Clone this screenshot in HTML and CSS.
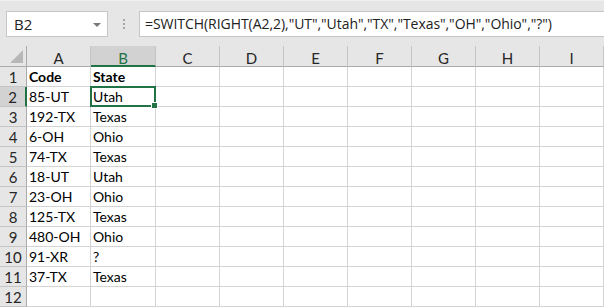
FILE: index.html
```html
<!DOCTYPE html>
<html lang="en">
<head>
    <meta charset="UTF-8">
    <title>SWITCH function</title>
    <link rel="stylesheet" href="styles.css">
</head>
<body>
    <div class="formula-bar">
        <div class="name-box">
            <span>B2</span>
            <span class="arrow"></span>
        </div>
        <div class="dots"><i></i><i></i><i></i></div>
        <div class="formula">=SWITCH(RIGHT(A2,2),"UT","Utah","TX","Texas","OH","Ohio","?")</div>
    </div>

    <div class="sheet">
        <div class="hd corner"><span class="tri"></span></div>
        <div class="hd col">A</div>
        <div class="hd col sel">B</div>
        <div class="hd col">C</div>
        <div class="hd col">D</div>
        <div class="hd col">E</div>
        <div class="hd col">F</div>
        <div class="hd col">G</div>
        <div class="hd col">H</div>
        <div class="hd col">I</div>

        <div class="hd row">1</div>
        <div class="cell bold">Code</div>
        <div class="cell bold">State</div>
        <div class="cell"></div><div class="cell"></div><div class="cell"></div><div class="cell"></div><div class="cell"></div><div class="cell"></div><div class="cell"></div>

        <div class="hd row sel">2</div>
        <div class="cell">85-UT</div>
        <div class="cell active">Utah</div>
        <div class="cell"></div><div class="cell"></div><div class="cell"></div><div class="cell"></div><div class="cell"></div><div class="cell"></div><div class="cell"></div>

        <div class="hd row">3</div>
        <div class="cell">192-TX</div>
        <div class="cell">Texas</div>
        <div class="cell"></div><div class="cell"></div><div class="cell"></div><div class="cell"></div><div class="cell"></div><div class="cell"></div><div class="cell"></div>

        <div class="hd row">4</div>
        <div class="cell">6-OH</div>
        <div class="cell">Ohio</div>
        <div class="cell"></div><div class="cell"></div><div class="cell"></div><div class="cell"></div><div class="cell"></div><div class="cell"></div><div class="cell"></div>

        <div class="hd row">5</div>
        <div class="cell">74-TX</div>
        <div class="cell">Texas</div>
        <div class="cell"></div><div class="cell"></div><div class="cell"></div><div class="cell"></div><div class="cell"></div><div class="cell"></div><div class="cell"></div>

        <div class="hd row">6</div>
        <div class="cell">18-UT</div>
        <div class="cell">Utah</div>
        <div class="cell"></div><div class="cell"></div><div class="cell"></div><div class="cell"></div><div class="cell"></div><div class="cell"></div><div class="cell"></div>

        <div class="hd row">7</div>
        <div class="cell">23-OH</div>
        <div class="cell">Ohio</div>
        <div class="cell"></div><div class="cell"></div><div class="cell"></div><div class="cell"></div><div class="cell"></div><div class="cell"></div><div class="cell"></div>

        <div class="hd row">8</div>
        <div class="cell">125-TX</div>
        <div class="cell">Texas</div>
        <div class="cell"></div><div class="cell"></div><div class="cell"></div><div class="cell"></div><div class="cell"></div><div class="cell"></div><div class="cell"></div>

        <div class="hd row">9</div>
        <div class="cell">480-OH</div>
        <div class="cell">Ohio</div>
        <div class="cell"></div><div class="cell"></div><div class="cell"></div><div class="cell"></div><div class="cell"></div><div class="cell"></div><div class="cell"></div>

        <div class="hd row">10</div>
        <div class="cell">91-XR</div>
        <div class="cell">?</div>
        <div class="cell"></div><div class="cell"></div><div class="cell"></div><div class="cell"></div><div class="cell"></div><div class="cell"></div><div class="cell"></div>

        <div class="hd row">11</div>
        <div class="cell">37-TX</div>
        <div class="cell">Texas</div>
        <div class="cell"></div><div class="cell"></div><div class="cell"></div><div class="cell"></div><div class="cell"></div><div class="cell"></div><div class="cell"></div>

        <div class="hd row">12</div>
        <div class="cell"></div><div class="cell"></div>
        <div class="cell"></div><div class="cell"></div><div class="cell"></div><div class="cell"></div><div class="cell"></div><div class="cell"></div><div class="cell"></div>
    </div>
</body>
</html>
```

FILE: styles.css
```css
* {
    box-sizing: border-box;
}
body {
    margin: 0;
    width: 604px;
    height: 307px;
    overflow: hidden;
    background-color: #fff;
    font-family: Lato, "Liberation Sans", sans-serif;
}

/* top bar with name box and formula */
.formula-bar {
    height: 46px;
    background-color: #e6e6e6;
    border-top: 1px solid #f0f0f0;
    display: flex;
    align-items: flex-start;
    padding: 10px 0 0 6px;
}
.name-box {
    width: 102px;
    height: 26px;
    background-color: #fff;
    border: 1px solid #c6c6c6;
    display: flex;
    align-items: center;
    justify-content: space-between;
    padding: 0 6px 0 7px;
    font-family: "Open Sans", sans-serif;
    font-size: 15px;
    color: #222;
}
.arrow {
    width: 0;
    height: 0;
    border-left: 4px solid transparent;
    border-right: 4px solid transparent;
    border-top: 4px solid #7a7a7a;
    margin-top: 1px;
}
.dots {
    width: 31px;
    height: 26px;
    display: flex;
    flex-direction: column;
    align-items: center;
    justify-content: center;
    gap: 2px;
}
.dots i {
    width: 2px;
    height: 2px;
    background-color: #a6a6a6;
}
.formula {
    flex: 1;
    height: 26px;
    background-color: #fff;
    border: 1px solid #c6c6c6;
    border-right: none;
    padding: 0 0 0 5px;
    font-family: "Open Sans", sans-serif;
    font-size: 14px;
    letter-spacing: -0.05px;
    line-height: 23px;
    color: #222;
    white-space: nowrap;
}

/* grid */
.sheet {
    display: grid;
    grid-template-columns: 27px 64px 65px repeat(7, 64px);
    grid-template-rows: 21px repeat(12, 20px);
    font-size: 15px;
}
.hd {
    background-color: #e6e6e6;
    color: #262626;
    border-right: 1px solid #c4c4c4;
    border-bottom: 1px solid #c4c4c4;
    display: flex;
    justify-content: center;
    align-items: center;
}
.col {
    border-bottom: 1px solid #ababab;
    padding-top: 3px;
}
.row {
    border-right: 1px solid #ababab;
    padding-top: 1px;
}
.hd.sel {
    background-color: #d2d2d2;
}
.col.sel {
    color: #217346;
    border-bottom: 2px solid #217346;
    padding-top: 4px;
}
.row.sel {
    border-right: 2px solid #217346;
}
.corner {
    position: relative;
    border-right: 1px solid #ababab;
    border-bottom: 1px solid #ababab;
}
.tri {
    position: absolute;
    right: 3px;
    bottom: 3px;
    width: 0;
    height: 0;
    border-left: 13px solid transparent;
    border-bottom: 13px solid #b7b7b7;
}
.cell {
    border-right: 1px solid #d4d4d4;
    border-bottom: 1px solid #d4d4d4;
    padding: 1px 0 0 2px;
    font-size: 14px;
    line-height: 18px;
    color: #000;
    white-space: nowrap;
}
.bold {
    font-weight: bold;
}
.active {
    position: relative;
}
.active::before {
    content: "";
    position: absolute;
    left: -1px;
    top: -1px;
    right: -1px;
    bottom: -1px;
    border: 2px solid #217346;
}
.active::after {
    content: "";
    position: absolute;
    right: -3px;
    bottom: -3px;
    width: 5px;
    height: 5px;
    background-color: #217346;
    border: 1px solid #fff;
}
```
